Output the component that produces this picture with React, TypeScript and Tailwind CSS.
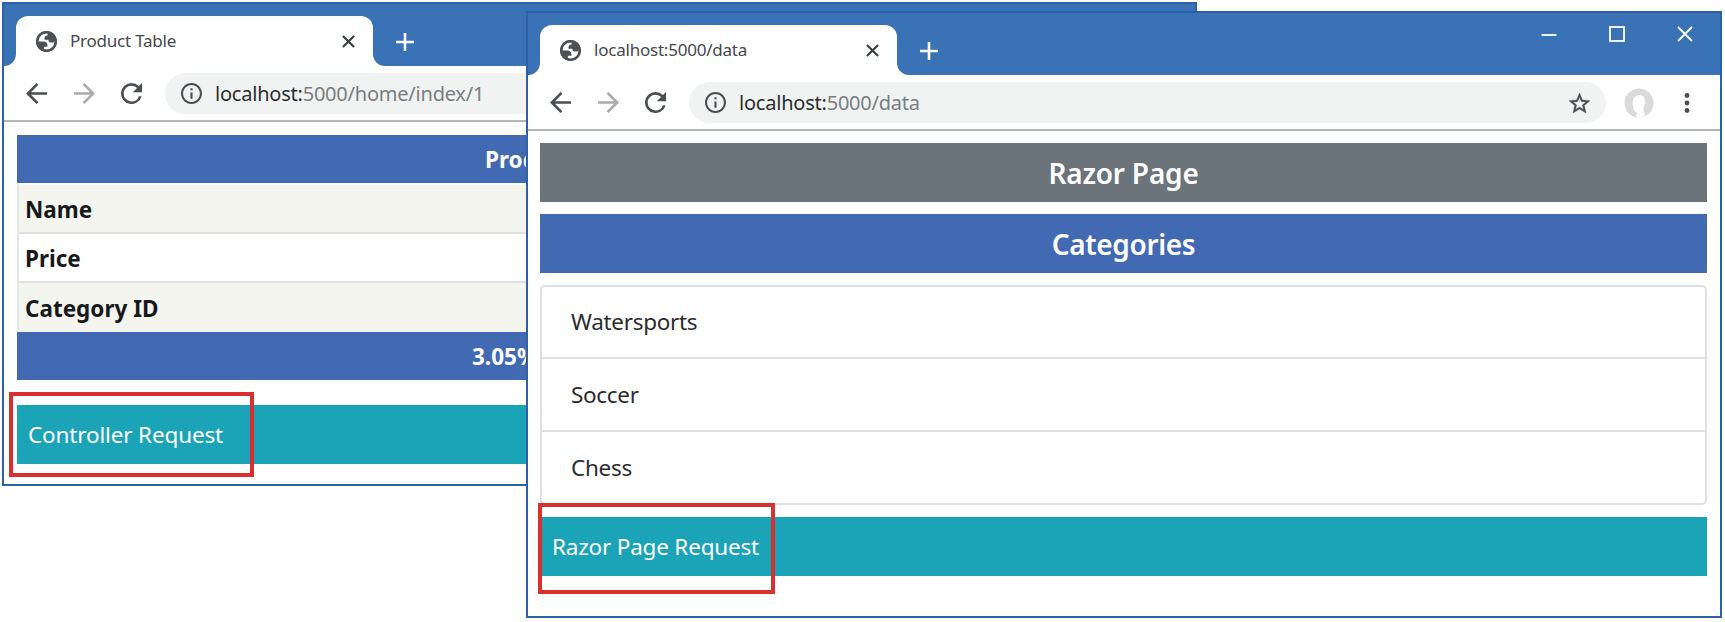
import type { ReactNode } from "react";

function Globe() {
  return (
    <svg viewBox="0 0 24 24" className="h-[25px] w-[25px] shrink-0 fill-[#4d5156]">
      <path
        fillRule="evenodd"
        d="M12 2C6.48 2 2 6.48 2 12s4.48 10 10 10 10-4.48 10-10S17.52 2 12 2zM4 12h4.400c3.407.022 4.922 1.730 4.543 5.127H9.488v2.470a8.004 8.004 0 0 0 10.498-8.083C19.327 12.504 18.332 13 17 13c-2.137 0-3.206-.916-3.206-2.750h-3.748c-.274-2.728.683-4.092 2.870-4.092 0-.975.327-1.597.811-1.970A8.004 8.004 0 0 0 4 12z"
      />
      <circle cx="12" cy="12" r="8.900" fill="none" stroke="#4d5156" strokeWidth="2.400" />
    </svg>
  );
}

function NavIcons() {
  return (
    <div className="flex shrink-0 items-center gap-[26px]">
      <svg viewBox="4 4 16 16" className="h-[21px] w-[21px] fill-[#4a4d51]">
        <path d="M20 11H7.830l5.590-5.590L12 4l-8 8 8 8 1.410-1.410L7.830 13H20v-2z" />
      </svg>
      <svg viewBox="4 4 16 16" className="ml-px h-[21px] w-[21px] fill-[#a9abad]">
        <path d="M12 4l-1.410 1.410L16.170 11H4v2h12.170l-5.580 5.590L12 20l8-8z" />
      </svg>
      <svg viewBox="4 4 16 16" className="h-[21px] w-[21px] fill-[#4a4d51]">
        <path d="M17.650 6.350A7.958 7.958 0 0 0 12 4a8 8 0 1 0 7.730 10h-2.080A5.990 5.990 0 0 1 12 18a6 6 0 1 1 0-12c1.660 0 3.140.69 4.220 1.780L13 11h7V4l-2.350 2.350z" />
      </svg>
    </div>
  );
}

function InfoIcon() {
  return (
    <svg viewBox="2 2 20 20" className="h-[21px] w-[21px] shrink-0 fill-[#4a4d51]">
      <path d="M11 7h2v2h-2zm0 4h2v6h-2zm1-9C6.480 2 2 6.480 2 12s4.480 10 10 10 10-4.480 10-10S17.520 2 12 2zm0 18c-4.410 0-8-3.590-8-8s3.590-8 8-8 8 3.590 8 8-3.590 8-8 8z" />
    </svg>
  );
}

function StarIcon() {
  return (
    <svg viewBox="2 2 20 19" className="h-[20px] w-[21px] shrink-0 fill-[#4a4d51] stroke-[#4a4d51]" strokeWidth="0.400">
      <path d="M22 9.240l-7.190-.62L12 2 9.190 8.630 2 9.240l5.460 4.730L5.820 21 12 17.270 18.180 21l-1.630-7.030L22 9.240zM12 15.400l-3.760 2.270 1-4.280-3.320-2.880 4.380-.38L12 6.100l1.710 4.040 4.380.38-3.320 2.880 1 4.280L12 15.400z" />
    </svg>
  );
}

function WindowControls() {
  return (
    <div className="mb-[33px] ml-auto mr-[27px] flex items-center gap-[52px]">
      <svg viewBox="0 0 16 16" className="h-4 w-4 stroke-white" fill="none" strokeWidth="1.800">
        <path d="M0.500 9h15" />
      </svg>
      <svg viewBox="0 0 16 16" className="h-4 w-4 stroke-white" fill="none" strokeWidth="1.800">
        <rect x="1" y="1" width="14" height="14" />
      </svg>
      <svg viewBox="0 0 16 16" className="h-4 w-4 stroke-white" fill="none" strokeWidth="1.800">
        <path d="M1 1l14 14M15 1L1 15" />
      </svg>
    </div>
  );
}

function TitleBar({ title, controls }: { title: ReactNode; controls?: boolean }) {
  return (
    <div className="flex h-[62px] shrink-0 items-end bg-[#3972b5]">
      <div className="h-3 w-3 bg-white">
        <div className="h-3 w-3 rounded-br-[12px] bg-[#3972b5]" />
      </div>
      <div className="flex h-[50px] w-[357px] items-center rounded-t-[12px] bg-white pl-[18px] pr-[18px]">
        <Globe />
        <div className="ml-[11px] whitespace-nowrap text-[17px] tracking-[-0.22px] text-[#45474a]">{title}</div>
        <svg viewBox="0 0 14 14" className="ml-auto h-[13px] w-[13px] stroke-[#3c4043]" fill="none" strokeWidth="2.400">
          <path d="M1 1l12 12M13 1L1 13" />
        </svg>
      </div>
      <div className="h-3 w-3 bg-white">
        <div className="h-3 w-3 rounded-bl-[12px] bg-[#3972b5]" />
      </div>
      <svg viewBox="0 0 18 18" className="mb-[15px] ml-[11px] h-[18px] w-[18px] stroke-white" fill="none" strokeWidth="2.600">
        <path d="M9 0v18M0 9h18" />
      </svg>
      {controls && <WindowControls />}
    </div>
  );
}

function Toolbar({ path, children }: { path: ReactNode; children?: ReactNode }) {
  return (
    <div className="flex h-[56px] shrink-0 items-center border-b-2 border-[#b4b6b8] pl-[22px] pr-[30px] pt-px">
      <NavIcons />
      <div className="ml-[23px] flex h-[41px] flex-1 items-center rounded-full bg-[#f0f3f1] pl-[16px] pr-[16px]">
        <InfoIcon />
        <div className="ml-[13px] whitespace-nowrap text-[20px] tracking-[-0.22px] text-[#7a7d80]">
          <span className="text-[#2b2d30]">localhost:</span>
          {path}
        </div>
        {children && (
          <div className="ml-auto">
            <StarIcon />
          </div>
        )}
      </div>
      {children}
    </div>
  );
}

const rows = ["Name", "Price", "Category ID"];
const categories = ["Watersports", "Soccer", "Chess"];

export default function App() {
  return (
    <div className="relative h-[622px] w-[1725px] overflow-hidden bg-white font-['Noto_Sans','Open_Sans',sans-serif]">
      <div className="absolute left-[2px] top-[2px] flex h-[484px] w-[1195px] flex-col border-2 border-[#2d60a8] bg-white">
        <TitleBar title={<span>Product Table</span>} />
        <Toolbar path={<span>5000/home/index/1</span>} />
        <div className="flex flex-col px-[13px] pt-[13px]">
          <div className="flex h-[48px] items-center bg-[#416ab3] pl-[468px] pt-[2px] text-[22.500px] font-bold text-white">
            <span>Product</span>
          </div>
          <div className="flex flex-col border-l-2 border-[#e4e6e8] pt-[2px]">
            {rows.map((row, i) => (
              <div
                key={row}
                className={`flex h-[49px] items-center pl-[6px] pt-[2px] text-[22.500px] font-bold text-[#16181b] ${
                  i % 2 === 0 ? "bg-[#f5f5f0]" : "bg-white"
                } ${i < 2 ? "border-b-2 border-[#dee0e2]" : ""}`}
              >
                <span>{row}</span>
              </div>
            ))}
          </div>
          <div className="flex h-[48px] items-center bg-[#416ab3] pl-[455px] pt-px text-[22.500px] font-bold text-white">
            <span>3.05%</span>
          </div>
          <div className="mt-[25px] flex h-[59px] items-center bg-[#1ba3b8] pl-[11px] pt-px text-[22.500px] tracking-[-0.150px] text-white">
            <span>Controller Request</span>
          </div>
        </div>
      </div>
      <div className="absolute left-[9px] top-[392px] h-[85px] w-[245px] border-4 border-[#d8302f]" />

      <div className="absolute left-[526px] top-[11px] flex h-[607px] w-[1196px] flex-col border-2 border-[#2d60a8] bg-white">
        <TitleBar title={<span>localhost:5000/data</span>} controls />
        <Toolbar path={<span>5000/data</span>}>
          <svg viewBox="0 0 30 30" className="ml-[18px] h-[30px] w-[30px]">
            <circle cx="15" cy="15" r="14.500" fill="#dadada" />
            <path d="M15.500 7c5 0 6.500 4.500 5.500 9-.6 2.500-2 4-1.500 6l1.500 6.500-8.500 1.500-.5-3.500 1.500-1.500-2.500-1.500C7.500 18 7.500 7.500 15.500 7z" fill="#fff" />
          </svg>
          <svg viewBox="0 0 6 20" className="ml-[30px] h-[20px] w-[6px] fill-[#4a4d51]">
            <circle cx="3" cy="2.500" r="2.400" />
            <circle cx="3" cy="10" r="2.400" />
            <circle cx="3" cy="17.500" r="2.400" />
          </svg>
        </Toolbar>
        <div className="flex flex-col gap-[12px] pl-[12px] pr-[13px] pt-[11.500px]">
          <div className="flex h-[59px] items-center justify-center bg-[#6b737b] pt-[2px] text-[28px] font-semibold tracking-[-0.200px] text-white">
            <span>Razor Page</span>
          </div>
          <div className="flex h-[59px] items-center justify-center bg-[#416ab3] pt-[2px] text-[28px] font-semibold tracking-[-0.350px] text-white">
            <span>Categories</span>
          </div>
          <div className="flex h-[220px] flex-col divide-y-2 divide-[#dfe0e2] rounded-[5px] border-2 border-[#dfe0e2]">
            {categories.map((name) => (
              <div
                key={name}
                className="flex flex-1 items-center pl-[29px] pt-px text-[22.500px] tracking-[-0.300px] text-[#2a2c2f]"
              >
                <span>{name}</span>
              </div>
            ))}
          </div>
          <div className="flex h-[59px] items-center bg-[#1ba3b8] pl-[12px] pt-px text-[22.500px] tracking-[-0.200px] text-white">
            <span>Razor Page Request</span>
          </div>
        </div>
      </div>
      <div className="absolute left-[538px] top-[503px] h-[91px] w-[237px] border-4 border-[#d8302f]" />
    </div>
  );
}
